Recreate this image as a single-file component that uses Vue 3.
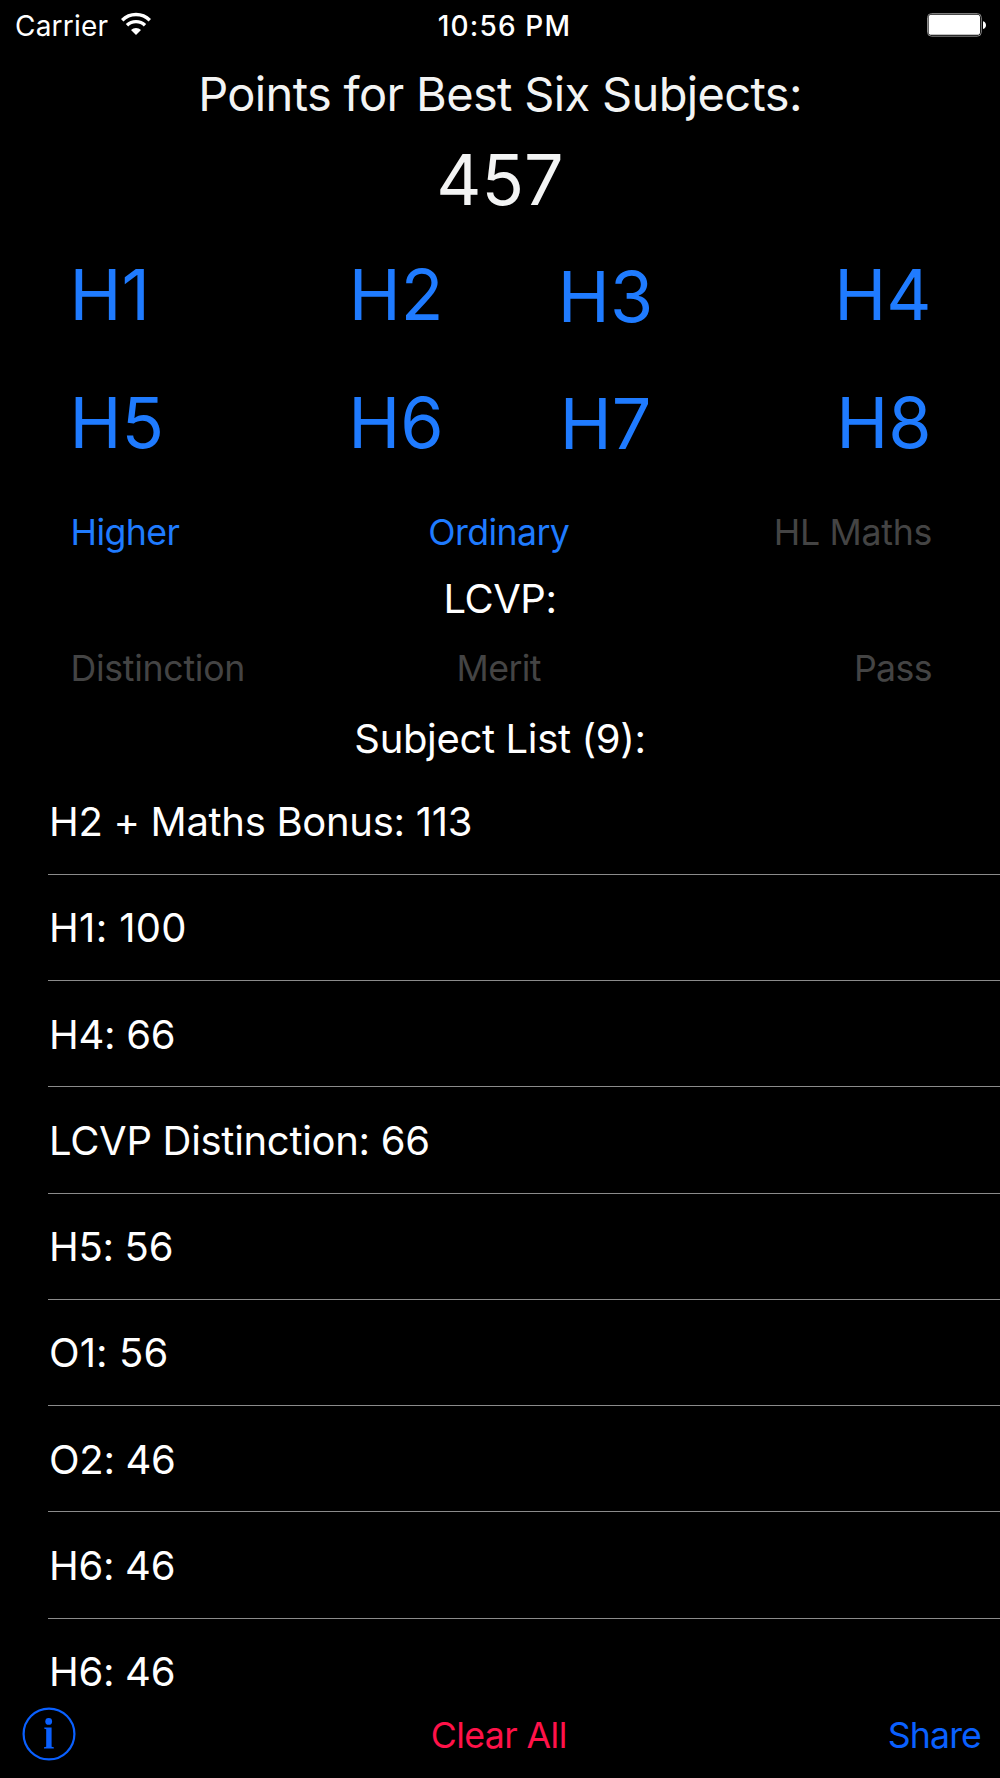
<script setup>
const gradeRows = [
  ['H1', 'H2', 'H3', 'H4'],
  ['H5', 'H6', 'H7', 'H8'],
]
const subjects = [
  'H2 + Maths Bonus: 113',
  'H1: 100',
  'H4: 66',
  'LCVP Distinction: 66',
  'H5: 56',
  'O1: 56',
  'O2: 46',
  'H6: 46',
  'H6: 46',
]
</script>

<template>
  <main class="screen">
    <header class="status">
      <div class="carrier">
        <span>Carrier</span>
        <svg class="wifi" width="32" height="24" viewBox="0 0 32 24">
          <g fill="none" stroke="#fff" stroke-width="3.4">
            <path d="M2.2 8.2A19.6 19.6 0 0 1 29.8 8.2" />
            <path d="M7 13.3A12.8 12.8 0 0 1 25 13.3" />
          </g>
          <path fill="#fff" d="M16 23L11 18A7.1 7.1 0 0 1 21 18Z" />
        </svg>
      </div>
      <span class="time">10:56 PM</span>
      <svg class="battery" width="60" height="24" viewBox="0 0 60 24">
        <rect x="0.5" y="0.6" width="53.8" height="22.6" rx="4" fill="none" stroke="#8a8a8a" />
        <rect x="1.6" y="1.8" width="51.4" height="20" rx="2.6" fill="#fff" />
        <path fill="#fff" d="M56 8.2C60 9.2 60 15 56 16Z" />
      </svg>
    </header>

    <h1 class="title">Points for Best Six Subjects:</h1>
    <div class="total">457</div>

    <div v-for="(row, r) in gradeRows" :key="r" class="grades" :class="'grades-' + r">
      <button v-for="grade in row" :key="grade" class="grade">{{ grade }}</button>
    </div>

    <div class="options levels">
      <button>Higher</button>
      <button>Ordinary</button>
      <button class="off wide">HL Maths</button>
    </div>
    <h2 class="heading lcvp">LCVP:</h2>
    <div class="options awards">
      <button class="off wide">Distinction</button>
      <button class="off">Merit</button>
      <button class="off">Pass</button>
    </div>
    <h2 class="heading listhead">Subject List (9):</h2>

    <ul class="list">
      <li v-for="(subject, i) in subjects" :key="i">{{ subject }}</li>
    </ul>

    <footer class="toolbar">
      <svg class="info" width="54" height="54" viewBox="0 0 54 54">
        <circle cx="27" cy="27" r="25.4" fill="none" stroke="#0a60ff" stroke-width="2.2" />
        <circle cx="26.7" cy="14.4" r="3.4" fill="#0a60ff" />
        <path fill="#0a60ff" d="M22.3 20.6H29.6V39.8L31.8 40.3V41.4H22V40.3L24.2 39.8V22.2L22.3 21.8Z" />
      </svg>
      <button class="clear">Clear All</button>
      <button class="share">Share</button>
    </footer>
  </main>
</template>

<style>
body {
  background: #000;
}
</style>

<style scoped>
.screen {
  display: flex;
  flex-direction: column;
  width: 1000px;
  height: 1778px;
  overflow: hidden;
  background: #000;
  color: #fff;
  font-family: Inter, "Liberation Sans", sans-serif;
  font-size: 40px;
  white-space: nowrap;
}
h1,
h2,
ul {
  margin: 0;
  padding: 0;
  font-weight: 400;
}
button {
  padding: 0;
  border: 0;
  background: none;
  color: #1f7bff;
  font: inherit;
  letter-spacing: inherit;
}
.status,
.options,
.toolbar {
  display: grid;
  grid-template-columns: 1fr auto 1fr;
  align-items: center;
  flex: none;
}
.status > :last-child,
.options > :last-child,
.toolbar > :last-child {
  justify-self: end;
}
.options > :first-child {
  justify-self: start;
}
.status {
  height: 50px;
  padding: 0 13px 0 15px;
  font-size: 28px;
}
.carrier {
  display: flex;
  align-items: center;
  gap: 12px;
  letter-spacing: 0.2px;
}
.carrier span,
.time {
  padding-top: 1px;
}
.wifi {
  position: relative;
  top: -1.5px;
}
.time {
  font-weight: 550;
  letter-spacing: 1.15px;
  position: relative;
  left: 3.5px;
}
.title,
.total,
.heading {
  display: flex;
  align-items: center;
  justify-content: center;
  flex: none;
}
.title {
  height: 86px;
  font-size: 47px;
  letter-spacing: -0.66px;
  color: #f3f4f4;
}
.total {
  height: 86px;
  font-size: 70px;
  color: #f3f4f4;
}
.grades {
  display: grid;
  grid-template-columns: 201.5px 250px 169px 241.5px;
  align-items: center;
  flex: none;
  padding-left: 69.5px;
  font-size: 70px;
}
.grades-0 {
  height: 145px;
}
.grades-1 {
  height: 110px;
}
.grade {
  justify-self: center;
}
.grade:first-child {
  justify-self: start;
}
.grade:nth-child(3) {
  padding-top: 2px;
}
.grades-0 .grade:nth-child(3) {
  padding-top: 4px;
}
.grade:last-child {
  justify-self: end;
}
.options {
  padding: 1px 68px 0 70.5px;
  box-sizing: border-box;
  font-size: 35.7px;
  letter-spacing: -0.6px;
}
.options > :nth-child(2) {
  margin-right: 5px;
}
.options .wide {
  letter-spacing: -0.3px;
}
.levels {
  height: 108px;
}
.heading {
  font-size: 40px;
  letter-spacing: -0.35px;
}
.lcvp {
  height: 26px;
  letter-spacing: -0.5px;
}
.awards {
  height: 112px;
}
.listhead {
  height: 31px;
}
.off {
  color: #444;
}
.list {
  flex: none;
  margin: 14.6px 0 -34.4px 48px;
  list-style: none;
  letter-spacing: -0.3px;
}
.list li {
  display: flex;
  align-items: center;
  box-sizing: border-box;
  height: 106.25px;
  padding: 1px 0 0 1px;
  border-bottom: 1px solid #8b8b8b;
}
.list li:nth-child(2) {
  letter-spacing: 0.35px;
}
.list li:nth-child(6) {
  letter-spacing: 0.1px;
}
.list li:last-child {
  border-bottom-color: transparent;
}
.toolbar {
  flex: 1;
  padding: 0 19px 0 21.5px;
  font-size: 35.7px;
  letter-spacing: -0.9px;
}
.toolbar button {
  padding-top: 1px;
  color: #0a60ff;
}
.toolbar .clear {
  margin-right: 5px;
  letter-spacing: -0.6px;
  color: #ff1249;
}
</style>
